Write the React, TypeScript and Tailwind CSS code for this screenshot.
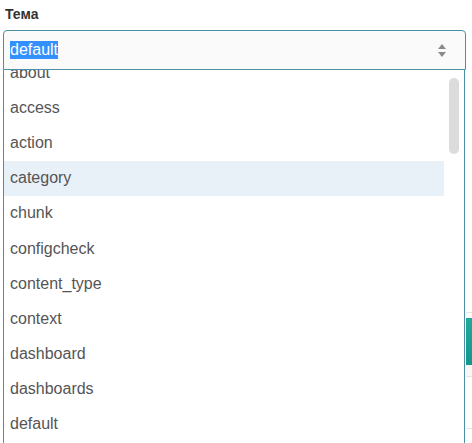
const options = [
  "about",
  "access",
  "action",
  "category",
  "chunk",
  "configcheck",
  "content_type",
  "context",
  "dashboard",
  "dashboards",
  "default",
  "delegation",
];

const ArrowsIcon = () => (
  <svg width="8" height="13" viewBox="0 0 8 13" fill="#8a8a8a">
    <path d="M4 0 L8 5 L0 5 Z" />
    <path d="M0 8 L8 8 L4 13 Z" />
  </svg>
);

export default function App() {
  const active = "category";

  return (
    <div className="flex w-[472px] h-[443px] overflow-hidden bg-white font-['Liberation_Sans',Arial,sans-serif]">
      {/* ─────────── Select column ─────────── */}
      <div className="flex flex-col w-[466px] shrink-0">
        <label className="pt-[4px] pl-[5px] text-[14px] leading-[20px] font-bold text-[#333]">
          Тема
        </label>

        <div className="mt-[6px] ml-[3px] w-[463px] h-[40px] shrink-0 flex items-center justify-between pl-[6px] pr-[19px] bg-[#fafafa] border border-[#4a90a8] rounded-t-[4px]">
          <span className="text-[16px] leading-[18px] text-white bg-[#3390ff]">default</span>
          <ArrowsIcon />
        </div>

        <div className="ml-[3px] w-[462px] h-[380px] shrink-0 flex border-x border-b border-[#4a90a8] bg-white overflow-hidden">
          <ul className="w-[440px] -mt-[15px]">
            {options.map((opt) => (
              <li
                key={opt}
                className={`h-[35.2px] flex items-center pl-[6px] text-[16px] text-[#555] ${
                  opt === active ? "bg-[#e8f0f8]" : ""
                }`}
              >
                {opt}
              </li>
            ))}
          </ul>
          <div className="flex-1 pl-[5px] pt-[8px]">
            <div className="w-[10px] h-[76px] rounded-full bg-[#dcdcdc]" />
          </div>
        </div>
      </div>

      {/* ─────────── Page underneath ─────────── */}
      <div className="flex flex-col flex-1 pt-[312px]">
        <div className="h-[6px] border-t border-[#e4e4e4]" />
        <div className="h-[47px] bg-gradient-to-b from-[#25a89a] to-[#14968c]" />
        <div className="h-[11px] bg-[#f7f7f7]" />
        <div className="h-[52px] border-t border-[#e4e4e4]" />
        <div className="h-[14px] border-t border-[#e4e4e4]" />
      </div>
    </div>
  );
}
